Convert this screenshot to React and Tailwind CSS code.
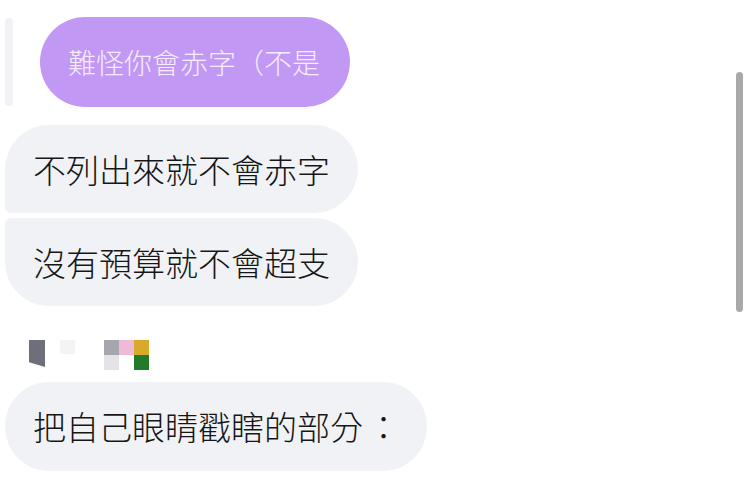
const font = { fontFamily: '"Noto Sans CJK TC", "Noto Sans", sans-serif' }

function Bubble({ children, corners, width }) {
  return (
    <div
      className={`flex items-center bg-[#f1f2f5] text-[#161616] text-[33px] font-light leading-none pl-[28px] h-[88px] ${corners} ${width}`}
    >
      {children}
    </div>
  )
}

export default function App() {
  return (
    <div className="relative w-[751px] h-[499px] overflow-hidden bg-white" style={font}>
      <div className="flex flex-col pt-[17px] pl-[5px]">
        {/* reply row */}
        <div className="flex items-stretch gap-[27px]">
          <div className="w-[8px] my-[1px] rounded-full bg-[#f2f2f6]" />
          <div className="flex items-center h-[90px] w-[310px] rounded-full bg-[#c298f5] pl-[28px] text-[28px] font-light leading-none text-[#f5ecff]">
            難怪你會赤字（不是
          </div>
        </div>

        <div className="mt-[18px] flex flex-col gap-[5px]">
          <Bubble corners="rounded-[44px] rounded-bl-[6px]" width="w-[353px]">不列出來就不會赤字</Bubble>
          <Bubble corners="rounded-[44px] rounded-tl-[6px]" width="w-[353px]">沒有預算就不會超支</Bubble>
        </div>

        {/* pixelated name */}
        <div className="mt-[34px] flex items-start h-[30px]">
          <div className="ml-[24px] w-[16px] h-[27px] bg-[#6e6f7a] [clip-path:polygon(0_0,100%_0,100%_100%,0_82%)]" />
          <div className="ml-[15px] w-[15px] h-[14px] bg-[#f4f4f5]" />
          <div className="ml-[29px] grid grid-cols-3 grid-rows-2 w-[45px] h-[30px]">
            <div className="bg-[#a5a6ae]" />
            <div className="bg-[#efbad7]" />
            <div className="bg-[#d7aa2c]" />
            <div className="bg-[#e3e3e8]" />
            <div className="bg-white" />
            <div className="bg-[#247a2b]" />
          </div>
        </div>

        <div className="mt-[12px]">
          <Bubble corners="rounded-[44px]" width="w-[422px] h-[89px]">把自己眼睛戳瞎的部分<span className="ml-[4px]">：</span></Bubble>
        </div>
      </div>

      {/* scrollbar */}
      <div className="absolute left-[736px] top-[72px] w-[7px] h-[240px] rounded-full bg-[#a9a9a9]" />
    </div>
  )
}
